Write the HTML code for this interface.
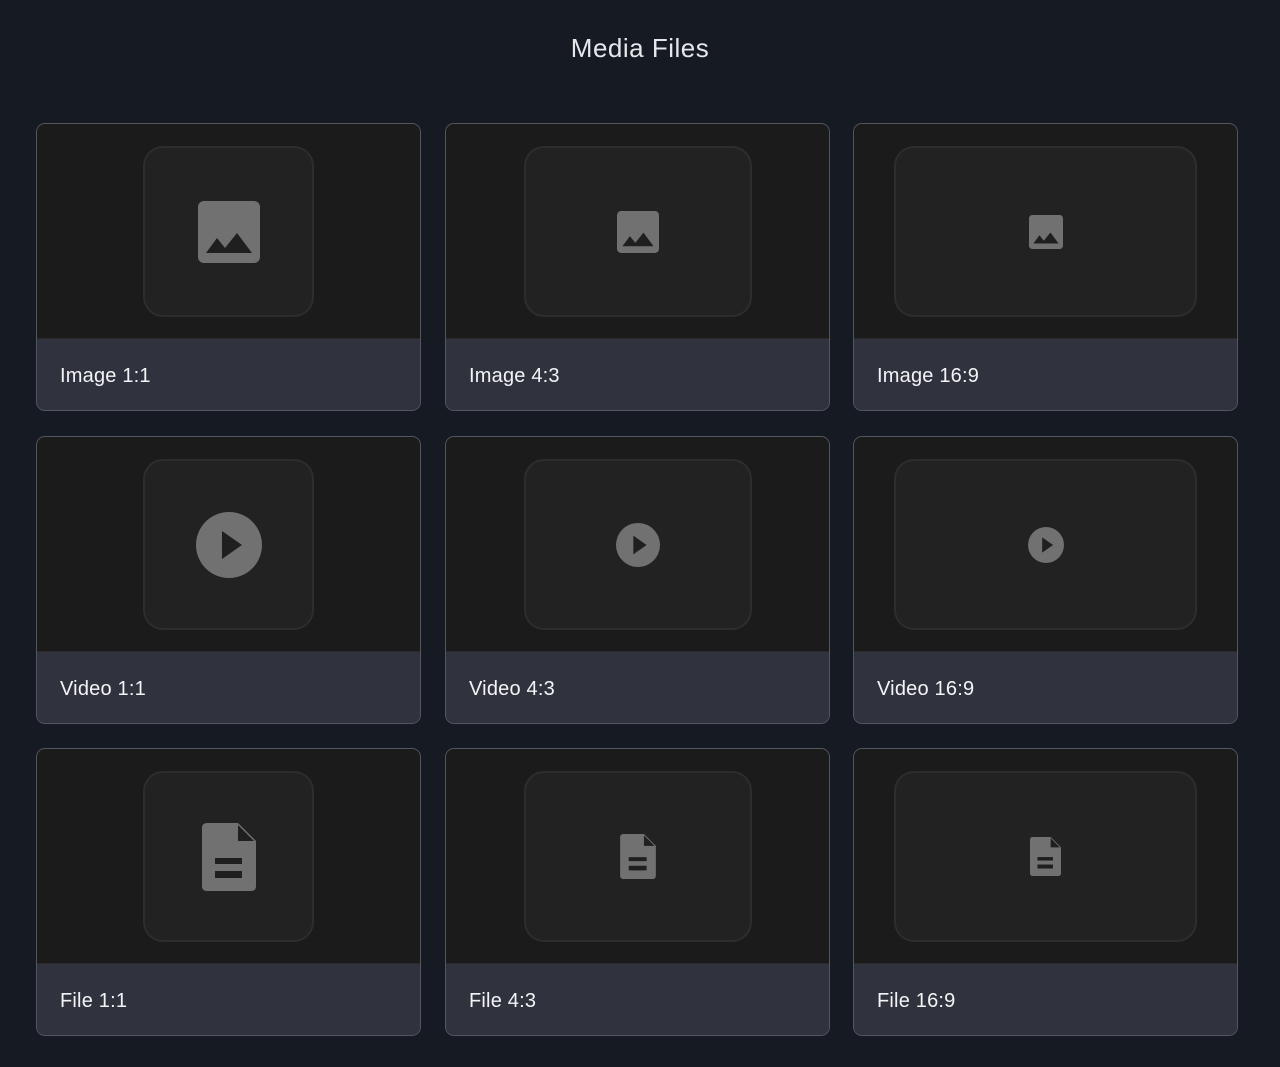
<!DOCTYPE html>
<html><head><meta charset="utf-8"><style>
*{box-sizing:border-box;margin:0;padding:0}
body{width:1280px;height:1067px;background:#151a23;font-family:"Liberation Sans",sans-serif;position:relative;overflow:hidden}
h1{position:absolute;top:33px;left:0;width:1280px;text-align:center;color:#e5e7eb;font-size:26px;font-weight:normal;letter-spacing:.5px}
.card{position:absolute;width:385px;height:288px;border:1px solid #53565e;border-radius:9px;overflow:hidden;background:#1b1b1b}
.top{position:absolute;left:0;top:0;right:0;height:215px;background:#1b1b1b;border-bottom:1px solid #2a2a2a}
.lab{position:absolute;left:0;right:0;top:215px;bottom:0;background:#30333d;color:#f3f4f6;font-size:20px;padding-left:23px;line-height:74px;letter-spacing:.2px}
.box{position:absolute;top:22px;height:171px;background:#222222;border:2px solid #2d2d2d;border-radius:20px;display:flex;align-items:center;justify-content:center}
</style></head><body>
<h1>Media Files</h1>
<div id="g"></div>
<script>
const xs=[36,445,853],ys=[123,436,748];
const kinds=['Image','Video','File'],rs=['1:1','4:3','16:9'];
const bw=[171,228,303],bl=[106,78,40];
const sz={Image:[62,42,34],Video:[66,44,36],File:[54,36,31]};
function icon(k,s){
 if(k==='Image')return `<svg width="${s}" height="${s}" viewBox="0 0 62 62"><rect width="62" height="62" rx="6" fill="#717171"/><path d="M8 52L19 37L27 47L39 32L54 52Z" fill="#1f1f1f"/></svg>`;
 if(k==='Video')return `<svg width="${s}" height="${s}" viewBox="0 0 66 66"><circle cx="33" cy="33" r="33" fill="#717171"/><path d="M26 19L46 33L26 47Z" fill="#1f1f1f"/></svg>`;
 const h=Math.round(s*68/54);
 return `<svg width="${s}" height="${h}" viewBox="0 0 54 68"><path d="M5 0H36L54 18V63Q54 68 49 68H5Q0 68 0 63V5Q0 0 5 0Z" fill="#717171"/><path d="M36 2V18H52Z" fill="#1f1f1f"/><rect x="13" y="35" width="27" height="6" fill="#1f1f1f"/><rect x="13" y="48" width="27" height="7" fill="#1f1f1f"/></svg>`;
}
let h='';
for(let r=0;r<3;r++)for(let c=0;c<3;c++){
 const k=kinds[r];
 h+=`<div class="card" style="left:${xs[c]}px;top:${ys[r]}px"><div class="top"><div class="box" style="left:${bl[c]}px;width:${bw[c]}px">${icon(k,sz[k][c])}</div></div><div class="lab">${k} ${rs[c]}</div></div>`;
}
document.getElementById('g').innerHTML=h;
</script>
</body></html>
